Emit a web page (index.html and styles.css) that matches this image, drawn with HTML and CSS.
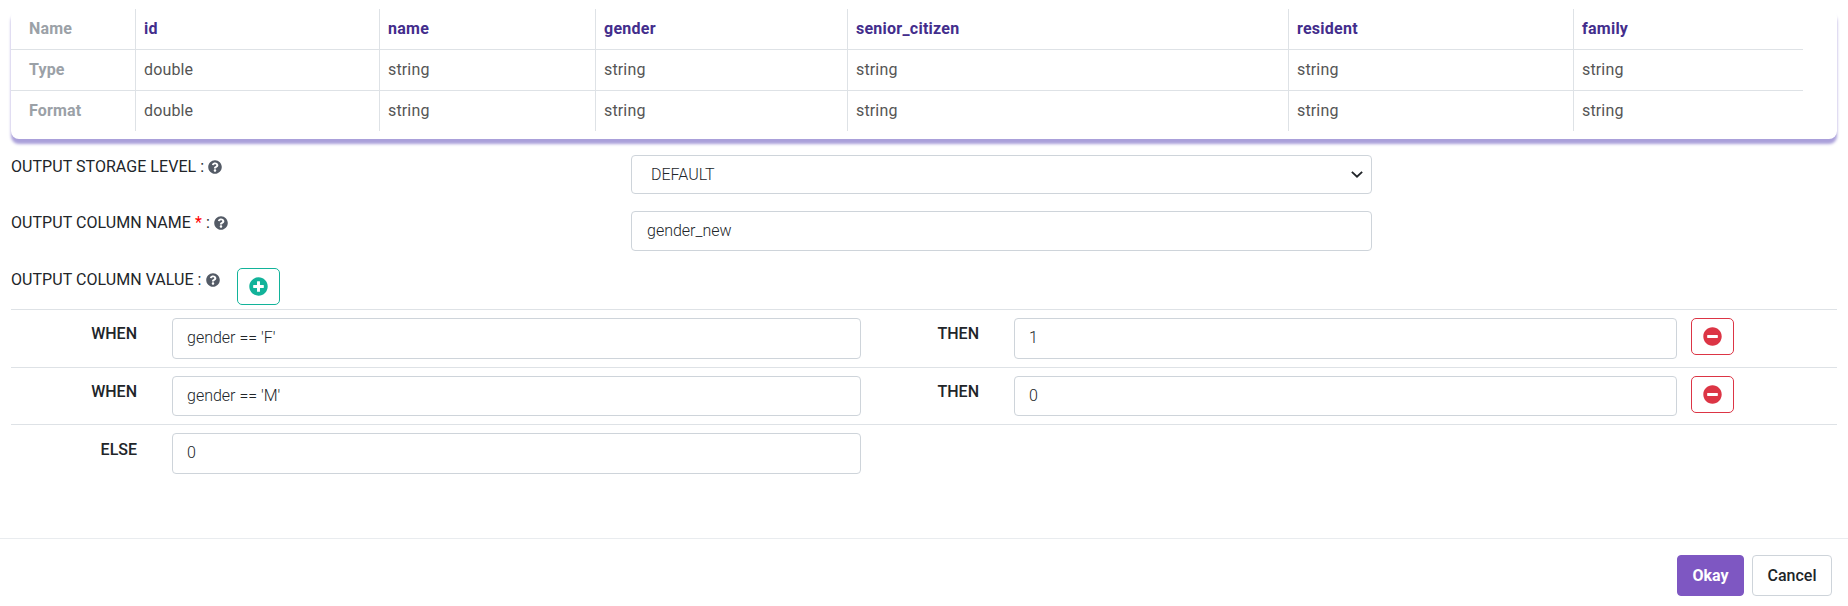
FILE: index.html
```html
<!DOCTYPE html>
<html lang="en">
<head>
<meta charset="utf-8">
<title>Output column settings</title>
<link rel="stylesheet" href="styles.css">
</head>
<body>
<svg class="defs" width="0" height="0" aria-hidden="true">
  <symbol id="help" viewBox="0 0 512 512"><path d="M504 256c0 137-111 248-248 248S8 393 8 256C8 119 119 8 256 8s248 111 248 248zM262.700 90c-54.500 0-89.300 23-116.500 63.800-3.500 5.300-2.400 12.400 2.700 16.300l34.700 26.300c5.200 3.900 12.600 3 16.700-2.100 17.900-22.700 30.100-35.800 57.300-35.800 20.400 0 45.700 13.100 45.700 33 0 15-12.400 22.700-32.500 34C247.100 238.500 216 254.900 216 296v4c0 6.600 5.400 12 12 12h56c6.600 0 12-5.400 12-12v-1.300c0-28.500 83.200-29.600 83.200-106.700 0-58-60.200-102-116.500-102zM256 338c-25.400 0-46 20.600-46 46s20.600 46 46 46 46-20.600 46-46-20.600-46-46-46z"/></symbol>
  <symbol id="plus" viewBox="0 0 512 512"><path d="M256 8C119 8 8 119 8 256s111 248 248 248 248-111 248-248S393 8 256 8zm144 276c0 6.600-5.400 12-12 12h-92v92c0 6.600-5.400 12-12 12h-56c-6.600 0-12-5.400-12-12v-92h-92c-6.600 0-12-5.400-12-12v-56c0-6.600 5.400-12 12-12h92v-92c0-6.600 5.400-12 12-12h56c6.600 0 12 5.400 12 12v92h92c6.600 0 12 5.400 12 12v56z"/></symbol>
  <symbol id="minus" viewBox="0 0 512 512"><path d="M256 8C119 8 8 119 8 256s111 248 248 248 248-111 248-248S393 8 256 8zM124 296c-6.600 0-12-5.400-12-12v-56c0-6.600 5.400-12 12-12h264c6.600 0 12 5.400 12 12v56c0 6.600-5.400 12-12 12H124z"/></symbol>
</svg>

<main class="body">
  <section class="schema">
    <table class="schema-table">
      <colgroup><col class="c-head"><col class="c-id"><col class="c-name"><col class="c-gender"><col class="c-senior"><col class="c-resident"><col class="c-family"></colgroup>
      <tr class="names"><th>Name</th><td>id</td><td>name</td><td>gender</td><td>senior_citizen</td><td>resident</td><td>family</td></tr>
      <tr><th>Type</th><td>double</td><td>string</td><td>string</td><td>string</td><td>string</td><td>string</td></tr>
      <tr><th>Format</th><td>double</td><td>string</td><td>string</td><td>string</td><td>string</td><td>string</td></tr>
    </table>
  </section>

  <div class="field field-storage">
    <label class="label">OUTPUT STORAGE LEVEL : <svg class="help"><use href="#help"/></svg></label>
    <div class="control select"><span>DEFAULT</span><svg class="chevron" viewBox="0 0 14 8"><path d="M1 1l6 5.500L13 1"/></svg></div>
  </div>
  <div class="field field-name">
    <label class="label">OUTPUT COLUMN NAME <span class="required">*</span> : <svg class="help"><use href="#help"/></svg></label>
    <div class="control name-control">gender_new</div>
  </div>
  <div class="value-head">
    <label class="label">OUTPUT COLUMN VALUE : <svg class="help"><use href="#help"/></svg></label>
    <button class="icon-btn add"><svg><use href="#plus"/></svg></button>
  </div>

  <div class="rule">
    <span class="word">WHEN</span><div class="control when-control">gender == 'F'</div>
    <span class="word">THEN</span><div class="control then-control">1</div>
    <button class="icon-btn remove"><svg><use href="#minus"/></svg></button>
  </div>
  <div class="rule rule-second">
    <span class="word">WHEN</span><div class="control when-control">gender == 'M'</div>
    <span class="word">THEN</span><div class="control then-control">0</div>
    <button class="icon-btn remove"><svg><use href="#minus"/></svg></button>
  </div>
  <div class="rule rule-else">
    <span class="word">ELSE</span><div class="control when-control">0</div>
  </div>
</main>

<footer class="footer">
  <button class="btn okay">Okay</button>
  <button class="btn cancel">Cancel</button>
</footer>
</body>
</html>
```
FILE: styles.css
```css
* { box-sizing: border-box; }
body {
  margin: 0;
  height: 606px;
  overflow: hidden;
  display: flex;
  flex-direction: column;
  background: #fff;
  color: #212529;
  font-family: Roboto, "Liberation Sans", sans-serif;
  font-size: 16px;
  line-height: 24px;
}
.defs { position: absolute; }
svg { fill: currentColor; }
.body { height: 538px; padding: 9px 11px 0; }

.schema {
  height: 130px;
  border-radius: 8px;
  box-shadow: 0 5px 3px #aaa0da;
}
.schema-table {
  width: 1792px;
  table-layout: fixed;
  border-collapse: separate;
  border-spacing: 0;
}
.c-head { width: 124px; }
.c-id { width: 244px; }
.c-name { width: 216px; }
.c-gender { width: 252px; }
.c-senior { width: 441px; }
.c-resident { width: 285px; }
.c-family { width: 230px; }
.schema-table th, .schema-table td {
  height: 41px;
  padding: 0 8px;
  text-align: left;
  border-bottom: 1px solid #dee2e6;
  font-weight: 400;
  color: #555;
}
.schema-table td { border-left: 1px solid #dee2e6; letter-spacing: 0.15px; }
.schema-table th { padding-left: 18px; font-weight: 700; color: #9ba1a7; letter-spacing: 0.15px; }
.schema-table tr:last-child th, .schema-table tr:last-child td { height: 40px; border-bottom: 0; }
.schema-table .names td { font-weight: 700; color: #432d8c; letter-spacing: 0.25px; }

.label { white-space: nowrap; letter-spacing: 0.05px; }
.help { width: 14px; height: 14px; color: #545b66; vertical-align: -2px; }
.required { color: #f00; }

.field { display: grid; grid-template-columns: 620px 741px; }
.field-storage { margin-top: 16px; height: 56px; }
.field-name { height: 57px; }
.control {
  height: 41px;
  padding: 0 15px;
  border: 1px solid #ced4da;
  border-radius: 4px;
  line-height: 39px;
  font-weight: 300;
}
.name-control { height: 40px; line-height: 38px; }
.select {
  height: 39px;
  padding: 0 8px 0 19px;
  display: flex;
  align-items: center;
  justify-content: space-between;
}
.chevron { width: 12px; height: 7px; fill: none; stroke: #212529; stroke-width: 2.200; }

.value-head { display: flex; height: 41px; gap: 17px; }
.icon-btn {
  width: 43px;
  height: 37px;
  padding: 0;
  display: flex;
  align-items: center;
  justify-content: center;
  background: #fff;
  border: 1px solid currentColor;
  border-radius: 5px;
}
.icon-btn svg { width: 19px; height: 19px; }
.add { color: #12b39a; }
.remove { color: #dc3545; grid-column: 8; }

.rule {
  display: grid;
  grid-template-columns: 126px 35px 689px 118px 35px 663px 14px 43px;
  height: 58px;
  padding-top: 8px;
  border-top: 1px solid #dee2e6;
}
.rule .control { padding: 0 14px; line-height: 38px; }
.rule-second { height: 57px; }
.rule-second .control { height: 40px; }
.word { padding-top: 4px; font-weight: 500; text-align: right; }
.rule-else .word { padding-top: 5px; }
.when-control { grid-column: 3; }
.then-control { grid-column: 6; }

.footer {
  height: 68px;
  display: flex;
  justify-content: flex-end;
  gap: 8px;
  padding: 16px 16px 0;
  border-top: 1px solid #e9ecef;
}
.btn {
  height: 41px;
  padding: 0;
  border: 1px solid #ced4da;
  border-radius: 4px;
  font: 500 16px Roboto, "Liberation Sans", sans-serif;
}
.okay { width: 67px; color: #fff; background: #7e57c2; border-color: #7e57c2; font-weight: 700; }
.cancel { width: 80px; color: #212529; background: #fff; }
```
